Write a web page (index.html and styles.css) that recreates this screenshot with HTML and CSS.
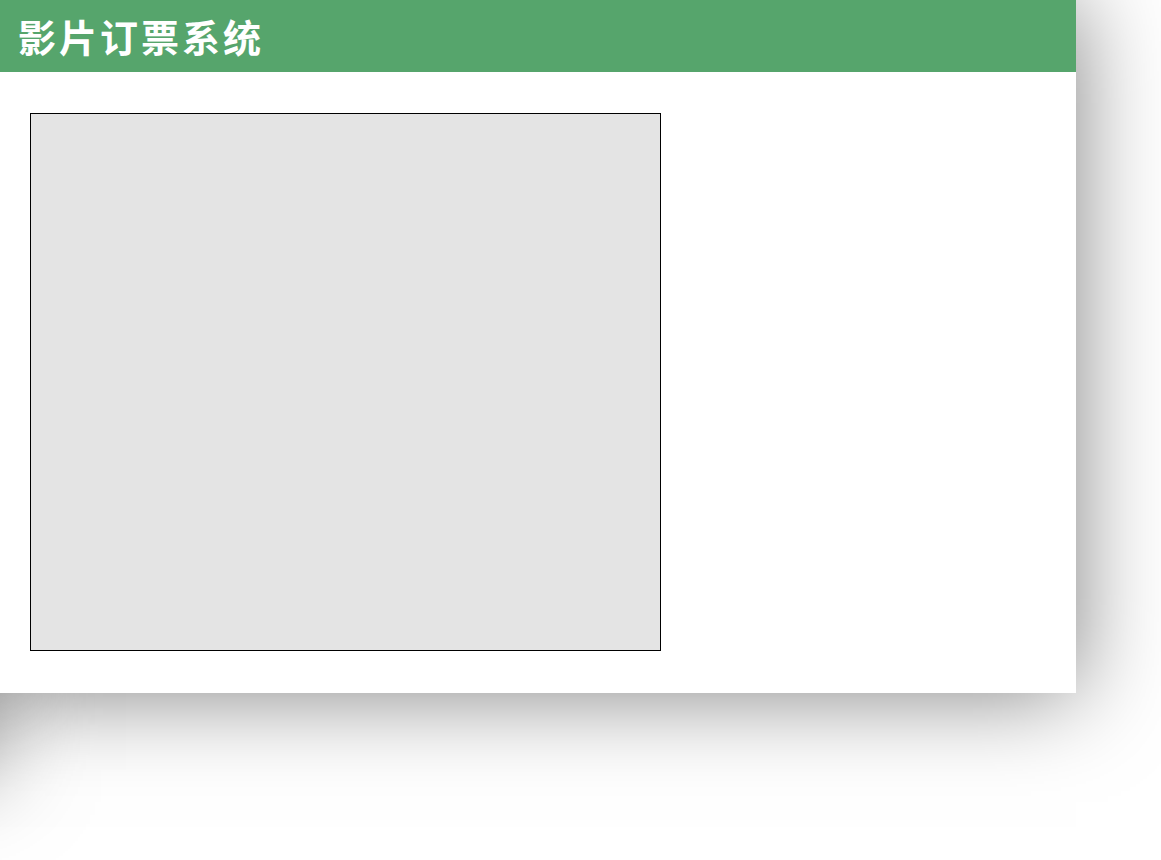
FILE: index.html
```html
<!DOCTYPE html>
<html lang="zh">
<head>
<meta charset="utf-8">
<title>影片订票系统</title>
<link rel="stylesheet" href="styles.css">
</head>
<body>
<div class="app">
  <header class="topbar"><h1 class="title">影片订票系统</h1></header>
  <main class="content">
    <div class="screen"></div>
  </main>
</div>
</body>
</html>
```
FILE: styles.css
```css
html, body {
  margin: 0;
  padding: 0;
  background: #ffffff;
  overflow: hidden;
}
body {
  position: relative;
  width: 1161px;
  height: 860px;
  font-family: "Liberation Sans", "Noto Sans CJK SC", sans-serif;
}
body::after {
  content: "";
  position: absolute;
  left: -400px;
  top: 0;
  width: 392px;
  height: 770px;
  background: #ffffff;
  box-shadow: 0 0 90px rgba(0, 0, 0, 0.5);
  z-index: 0;
}
.app {
  position: relative;
  z-index: 1;
  width: 1076px;
  background: #ffffff;
  box-shadow: 0 0 90px rgba(0, 0, 0, 0.5);
}
.topbar {
  height: 72px;
  background: #56a56c;
  display: flex;
  align-items: center;
  padding: 0 18px;
  box-sizing: border-box;
}
.title {
  margin: 0;
  color: #ffffff;
  font-family: "Noto Sans CJK SC", sans-serif;
  font-weight: 700;
  font-size: 38px;
  letter-spacing: 3px;
  line-height: 1;
}
.content {
  padding: 41px 30px 42px;
}
.screen {
  width: 629px;
  height: 536px;
  background: #e4e4e4;
  border: 1px solid #000000;
}
```
